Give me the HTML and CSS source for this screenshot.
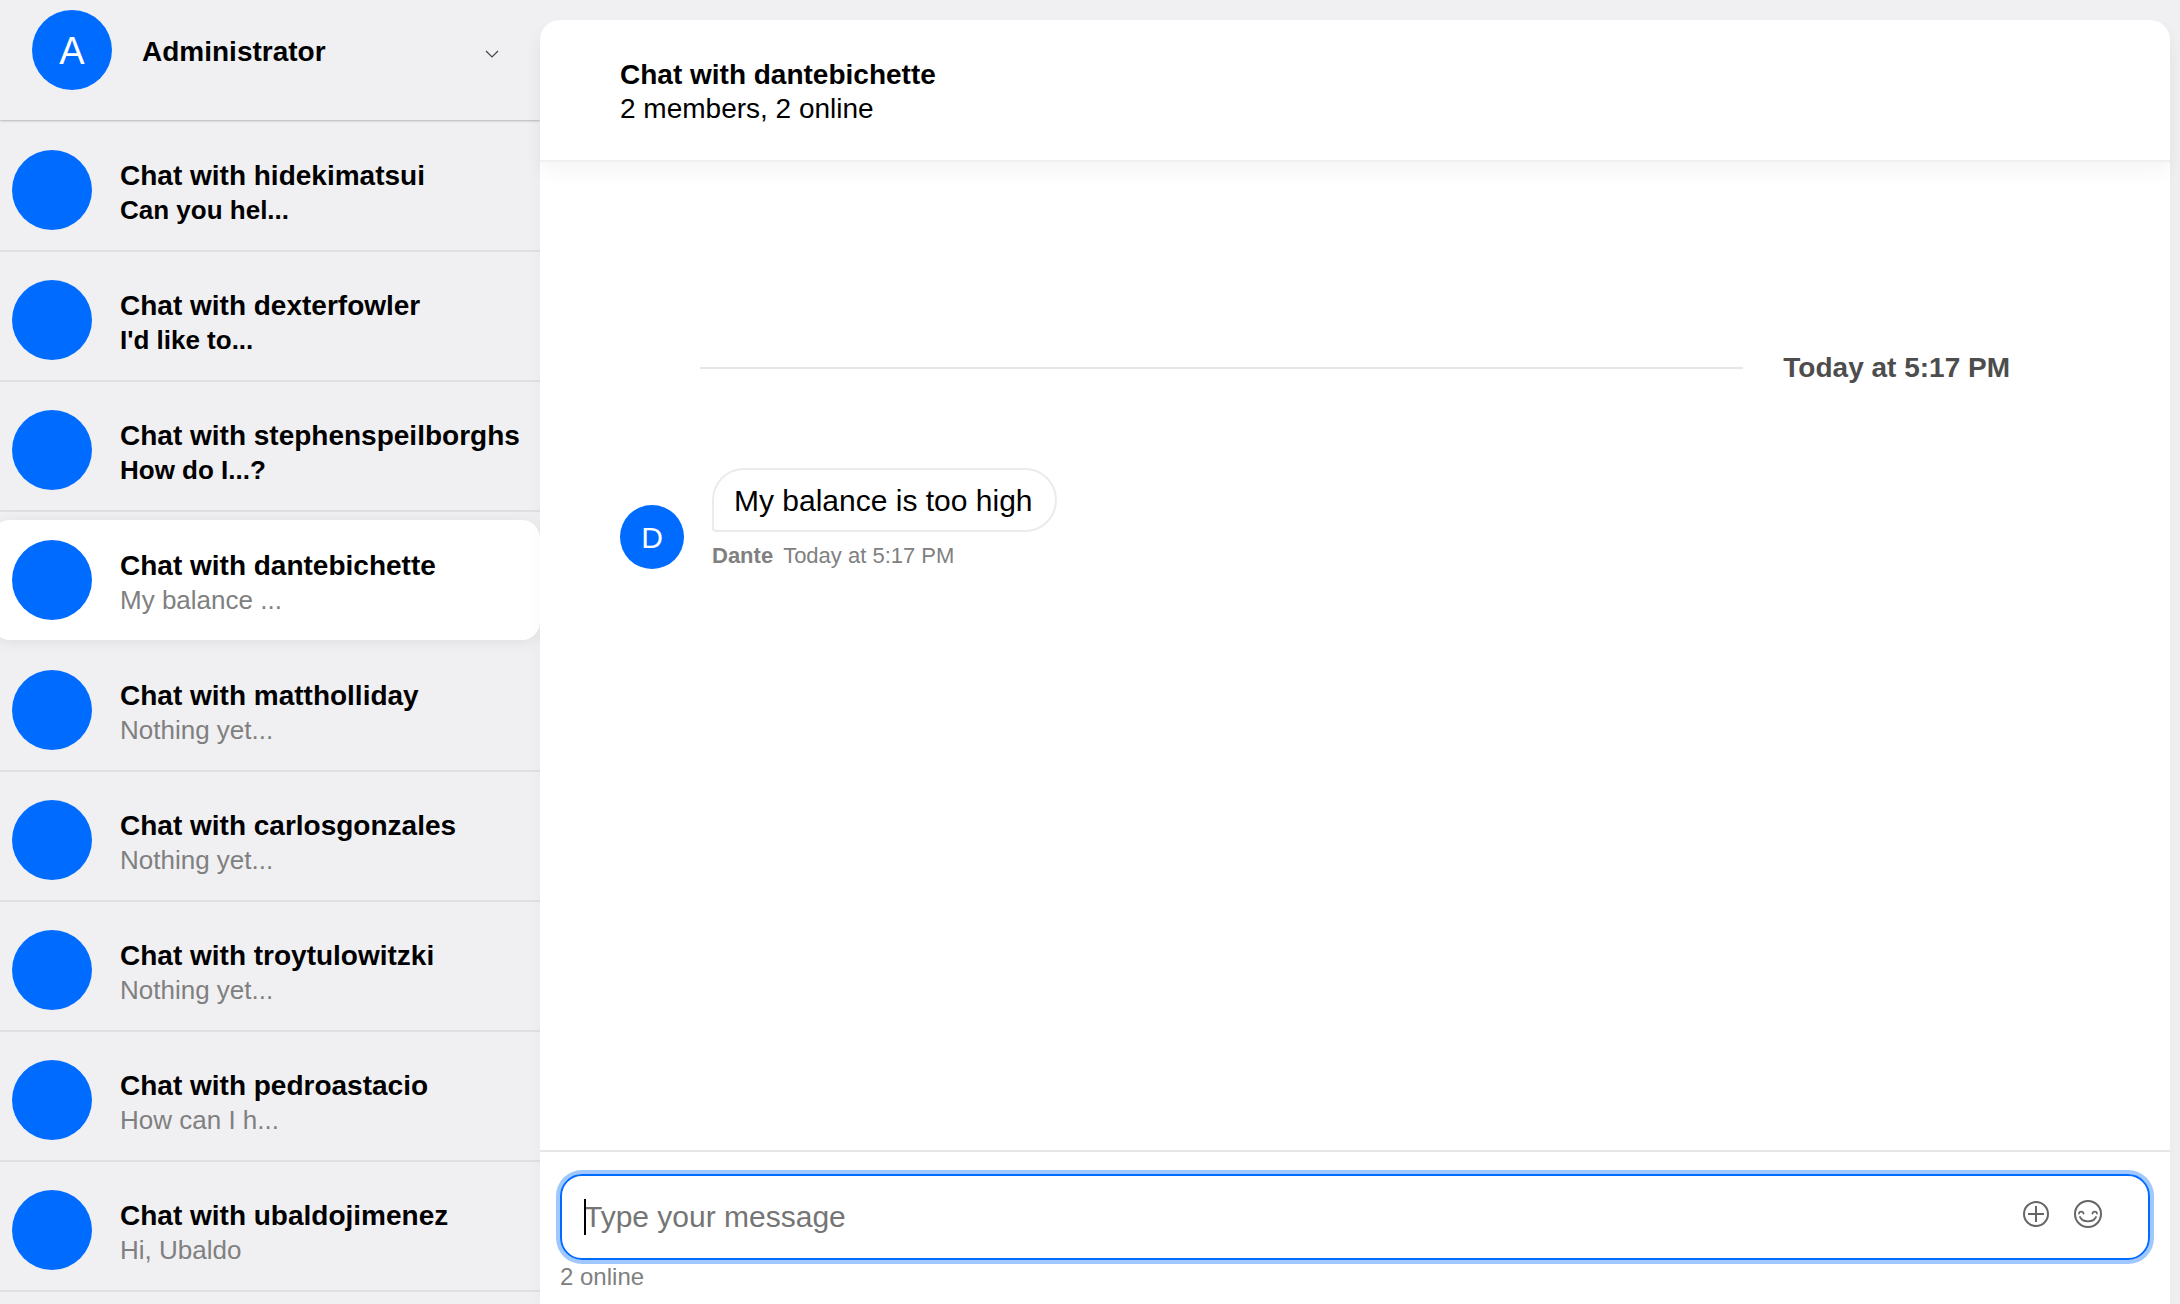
FILE: index.html
```html
<!DOCTYPE html>
<html lang="en">
<head>
<meta charset="utf-8">
<meta name="viewport" content="width=device-width, initial-scale=1">
<title>Chat</title>
<link rel="stylesheet" href="styles.css">
</head>
<body>
<div class="app">
  <aside class="sidebar">
    <header class="account">
      <span class="avatar">A</span>
      <h1 class="account-name">Administrator</h1>
      <button class="icon-button account-toggle" type="button" aria-label="Account menu">
        <svg width="14" height="9" viewBox="0 0 14 9" fill="none" stroke="#444" stroke-width="1.2"><path d="M1 1l6 6L13 1"/></svg>
      </button>
    </header>
    <nav aria-label="Chats">
      <ul class="chats">
        <li class="chat unread"><a class="chat-card" href="#"><span class="avatar"></span><span class="chat-text"><span class="chat-title">Chat with hidekimatsui</span><span class="chat-preview">Can you hel...</span></span></a></li>
        <li class="chat unread"><a class="chat-card" href="#"><span class="avatar"></span><span class="chat-text"><span class="chat-title">Chat with dexterfowler</span><span class="chat-preview">I'd like to...</span></span></a></li>
        <li class="chat unread"><a class="chat-card" href="#"><span class="avatar"></span><span class="chat-text"><span class="chat-title">Chat with stephenspeilborghs</span><span class="chat-preview">How do I...?</span></span></a></li>
        <li class="chat active"><a class="chat-card" href="#" aria-current="page"><span class="avatar"></span><span class="chat-text"><span class="chat-title">Chat with dantebichette</span><span class="chat-preview">My balance ...</span></span></a></li>
        <li class="chat"><a class="chat-card" href="#"><span class="avatar"></span><span class="chat-text"><span class="chat-title">Chat with mattholliday</span><span class="chat-preview">Nothing yet...</span></span></a></li>
        <li class="chat"><a class="chat-card" href="#"><span class="avatar"></span><span class="chat-text"><span class="chat-title">Chat with carlosgonzales</span><span class="chat-preview">Nothing yet...</span></span></a></li>
        <li class="chat"><a class="chat-card" href="#"><span class="avatar"></span><span class="chat-text"><span class="chat-title">Chat with troytulowitzki</span><span class="chat-preview">Nothing yet...</span></span></a></li>
        <li class="chat"><a class="chat-card" href="#"><span class="avatar"></span><span class="chat-text"><span class="chat-title">Chat with pedroastacio</span><span class="chat-preview">How can I h...</span></span></a></li>
        <li class="chat"><a class="chat-card" href="#"><span class="avatar"></span><span class="chat-text"><span class="chat-title">Chat with ubaldojimenez</span><span class="chat-preview">Hi, Ubaldo</span></span></a></li>
      </ul>
    </nav>
  </aside>

  <main class="conversation">
    <header class="conversation-header">
      <h2 class="conversation-title">Chat with dantebichette</h2>
      <p class="conversation-members">2 members, 2 online</p>
    </header>

    <section class="messages">
      <div class="date-separator"><time>Today at 5:17 PM</time></div>
      <article class="message">
        <span class="avatar avatar-small">D</span>
        <div class="message-body">
          <p class="bubble">My balance is too high</p>
          <p class="message-meta"><strong>Dante</strong><time>Today at 5:17 PM</time></p>
        </div>
      </article>
    </section>

    <footer class="composer">
      <form class="composer-box">
        <span class="caret"></span>
        <input class="composer-input" type="text" placeholder="Type your message" aria-label="Message">
        <div class="composer-tools">
          <button class="icon-button" type="button" aria-label="Add attachment">
            <svg width="28" height="28" viewBox="0 0 28 28" fill="none" stroke="#666" stroke-width="2"><circle cx="14" cy="14" r="12"/><path d="M14 6v16M6 14h16"/></svg>
          </button>
          <button class="icon-button" type="button" aria-label="Insert emoji">
            <svg width="28" height="28" viewBox="0 0 28 28" fill="none" stroke="#666" stroke-width="2"><circle cx="14" cy="14" r="13"/><path d="M5 13.500c.3-2.600 4.200-2.600 4.500 0M18.500 13.500c.3-2.600 4.200-2.600 4.500 0M6 17c3 5.800 13 5.800 16 0" stroke-width="1.800" stroke-linecap="round"/></svg>
          </button>
        </div>
      </form>
      <p class="online-count">2 online</p>
    </footer>
  </main>
</div>
</body>
</html>
```

FILE: styles.css
```css
*,
*::before {
  box-sizing: border-box;
}

body,
h1,
h2,
p,
ul {
  margin: 0;
}

body {
  background: #f0f0f3;
  color: #000;
  font-family: "Liberation Sans", Arial, sans-serif;
  font-size: 28px;
  line-height: 34px;
}

h1,
h2 {
  font-size: 28px;
  font-weight: bold;
}

.app {
  display: grid;
  grid-template-columns: minmax(400px, min(25%, 540px)) 1fr;
  height: 100vh;
  overflow: hidden;
}

.avatar {
  display: flex;
  flex: none;
  align-items: center;
  justify-content: center;
  width: 80px;
  height: 80px;
  padding-top: 2px;
  border-radius: 50%;
  background: #006cff;
  color: #fff;
  font-size: 38px;
}

.avatar-small {
  width: 64px;
  height: 64px;
  font-size: 30px;
}

.icon-button {
  display: flex;
  padding: 0;
  border: 0;
  background: none;
}

/* Sidebar */

.sidebar {
  overflow: hidden;
}

.account {
  display: flex;
  align-items: center;
  gap: 30px;
  padding: 10px 41px 30px 32px;
  box-shadow: 0 1px 2px rgba(0, 0, 0, 0.25);
}

.account-name {
  padding-top: 4px;
}

.account-toggle {
  margin-left: auto;
  padding-top: 8px;
}

.chats {
  padding: 2px 0 0;
  list-style: none;
}

.chat {
  padding-top: 8px;
  border-bottom: 2px solid #dfdfe2;
}

.chat-card {
  display: flex;
  align-items: center;
  gap: 28px;
  padding: 20px 12px;
  color: inherit;
  text-decoration: none;
}

.chat-text {
  display: flex;
  flex-direction: column;
  min-width: 0;
  padding-top: 6px;
  white-space: nowrap;
}

.chat-title {
  font-weight: bold;
}

.chat-preview {
  color: #808080;
  font-size: 26px;
}

.unread .chat-preview {
  color: #000;
  font-weight: bold;
}

.active {
  border-color: transparent;
}

.active .chat-card {
  margin-left: -8px;
  padding-left: 20px;
  border-radius: 18px;
  background: #fff;
  box-shadow: 0 2px 14px rgba(0, 0, 0, 0.08);
}

/* Conversation */

.conversation {
  position: relative;
  display: flex;
  flex-direction: column;
  min-width: 0;
  margin: 20px 10px 0 0;
  border-radius: 20px 20px 0 0;
  background: #fff;
  box-shadow: 0 10px 20px rgba(0, 0, 0, 0.03);
}

.conversation-header {
  padding: 38px 80px 34px;
  border-bottom: 2px solid #f0f0f0;
  border-radius: 20px 20px 0 0;
  box-shadow: 0 10px 20px rgba(0, 0, 0, 0.04);
}

.messages {
  flex: 1;
  padding: 189px 80px 0;
}

.date-separator {
  display: flex;
  align-items: center;
  gap: 40px;
  padding: 0 80px;
  color: #4d4d4d;
  font-weight: bold;
}

.date-separator::before {
  content: "";
  flex: 1;
  border-top: 2px solid #e6e6e6;
}

.message {
  display: flex;
  align-items: flex-end;
  gap: 28px;
  margin-top: 83px;
}

.bubble {
  width: fit-content;
  padding: 14px 22px 12px 20px;
  border: 2px solid #ebebeb;
  border-radius: 32px 32px 32px 4px;
  font-size: 30px;
}

.message-meta {
  display: flex;
  gap: 10px;
  padding-top: 11px;
  color: #808080;
  font-size: 22px;
  line-height: 26px;
}

.composer {
  padding: 22px 20px 10px;
  border-top: 2px solid #e6e6e6;
}

.composer-box {
  position: relative;
  display: flex;
  align-items: center;
  gap: 24px;
  padding: 22px 46px 22px 22px;
  border: 2px solid #006cff;
  border-radius: 22px;
  box-shadow: 0 0 0 4px #a0c8ff;
}

.composer-input {
  flex: 1;
  min-width: 0;
  height: 38px;
  padding: 0;
  border: 0;
  outline: 0;
  background: none;
  font: inherit;
  font-size: 30px;
}

.composer-input::placeholder {
  color: #757575;
  opacity: 1;
}

.composer-tools {
  display: flex;
  gap: 24px;
  padding-bottom: 6px;
}

.caret {
  position: absolute;
  left: 22px;
  width: 2px;
  height: 36px;
  background: #000;
}

.online-count {
  color: #808080;
  font-size: 24px;
}
```
